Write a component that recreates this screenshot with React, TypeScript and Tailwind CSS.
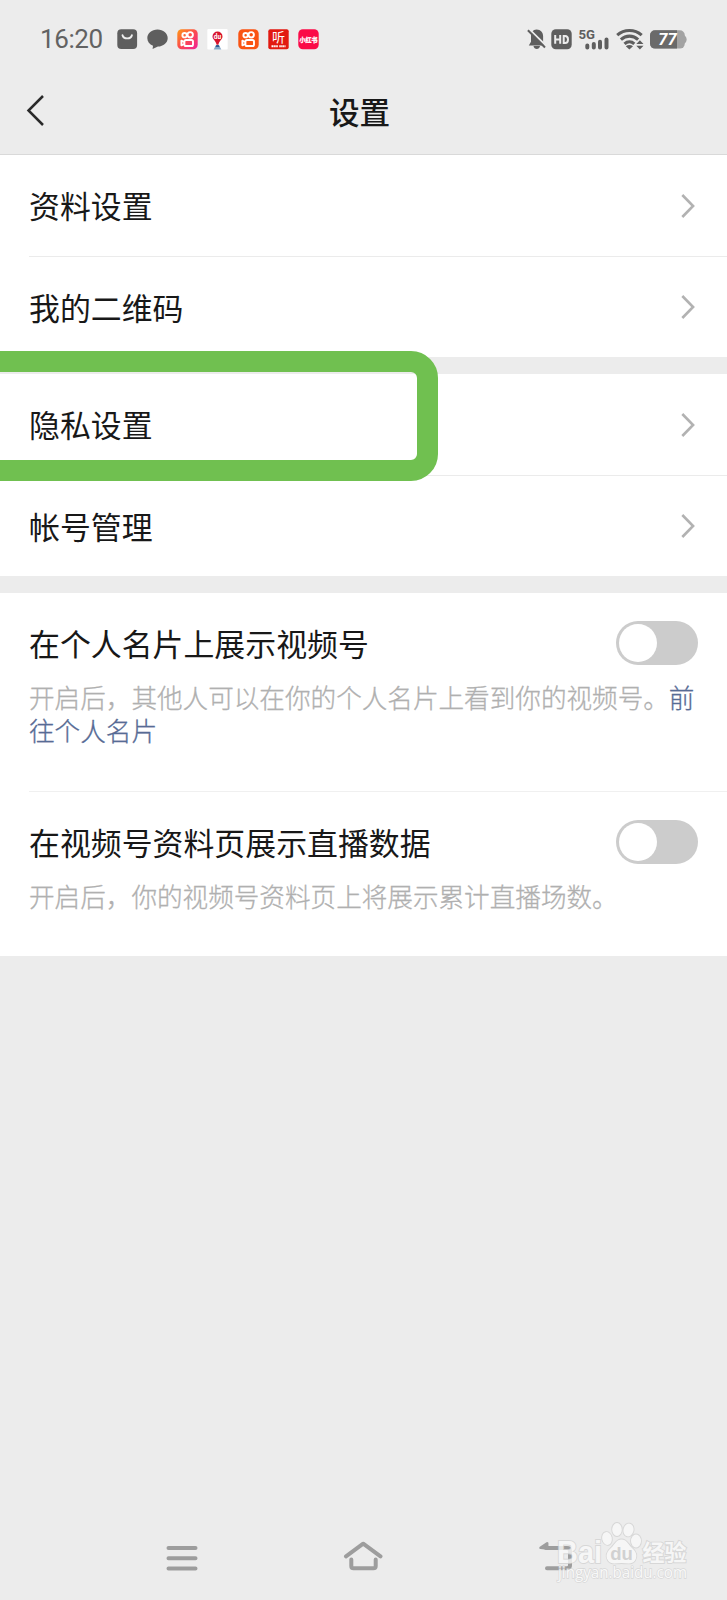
import type { ReactNode } from "react";

interface LinkItem {
  label: string;
}

interface ToggleItem {
  label: string;
  description: string;
  link?: string;
}

const LINK_GROUPS: LinkItem[][] = [
  [{ label: "资料设置" }, { label: "我的二维码" }],
  [{ label: "隐私设置" }, { label: "帐号管理" }],
];

const TOGGLES: ToggleItem[] = [
  {
    label: "在个人名片上展示视频号",
    description: "开启后，其他人可以在你的个人名片上看到你的视频号。",
    link: "前往个人名片",
  },
  {
    label: "在视频号资料页展示直播数据",
    description: "开启后，你的视频号资料页上将展示累计直播场数。",
  },
];

function AppIcon({ children }: { children: ReactNode }) {
  return (
    <svg width="21" height="21" viewBox="0 0 21 21" className="shrink-0 overflow-visible">
      {children}
    </svg>
  );
}

function CameraMark() {
  return (
    <g fill="none" stroke="#fff" strokeWidth="1.9">
      <circle cx="7.6" cy="6.2" r="2.2" />
      <circle cx="13.2" cy="5.8" r="2.7" />
      <rect x="7.4" y="11" width="8.6" height="6" rx="1.6" />
      <path d="M7.2 13 4.4 11.7v4.6L7.2 15" strokeLinejoin="round" />
    </g>
  );
}

function StatusBar() {
  return (
    <div className="flex h-[78px] items-center pl-[40px] pr-[40px]">
      <span className="w-[76.5px] whitespace-nowrap font-[Roboto] text-[26px] leading-[30px] tracking-[-0.4px] text-[#626262]">
        16:20
      </span>
      <div className="flex items-center gap-[9.3px]">
        <AppIcon>
          <rect x="0.3" y="0.3" width="19.8" height="19.8" rx="4" fill="#5e5e5e" />
          <path d="M5.5 6.2a4.8 4 0 0 0 9.4 0" fill="none" stroke="#eee" strokeWidth="1.9" strokeLinecap="round" />
        </AppIcon>
        <AppIcon>
          <path
            d="M10.5.4c5.7 0 10.2 3.6 10.2 8.6s-4.4 8.4-9.8 8.6l-5.3 2.5.4-3.4C2.5 15.3.3 12.5.3 9 .3 4 4.8.4 10.5.4Z"
            fill="#5e5e5e"
          />
        </AppIcon>
        <AppIcon>
          <defs>
            <linearGradient id="sunset" x1="0" y1="0" x2="1" y2="1">
              <stop offset="0" stopColor="#ff9a14" />
              <stop offset="0.5" stopColor="#fb4a4e" />
              <stop offset="1" stopColor="#f0209a" />
            </linearGradient>
          </defs>
          <rect x="0.3" y="0.3" width="20.4" height="20" rx="4.5" fill="url(#sunset)" />
          <CameraMark />
        </AppIcon>
        <AppIcon>
          <rect x="0.3" y="0" width="20.4" height="20.4" rx="1" fill="#fff" />
          <path
            d="M10.5 2.6a5 5 0 0 1 5 5c0 2.800-3.100 4.100-4.100 8.200H9.600c-1-4.100-4.100-5.400-4.100-8.200a5 5 0 0 1 5-5Z"
            fill="#d8142c"
          />
          <text x="10.5" y="9.8" fontSize="6.5" fontWeight="700" textAnchor="middle" fill="#fff" fontFamily="Roboto">
            du
          </text>
          <path d="M9 16h3l2.300 4.400H6.700Z" fill="#88aac9" />
          <path d="M9.300 16h2.400l.8 2h-4Z" fill="#335c93" />
        </AppIcon>
        <AppIcon>
          <rect x="0.3" y="0.3" width="20.4" height="20" rx="4.5" fill="#fa5312" />
          <CameraMark />
        </AppIcon>
        <AppIcon>
          <rect x="0.3" y="0.3" width="20.4" height="20" rx="2" fill="#e21910" />
          <text x="10.5" y="13" fontSize="13" textAnchor="middle" fill="#fff" fontFamily="'Noto Sans CJK SC'">
            听
          </text>
          <path d="M3.5 17.200h6.500M11.300 17.200h6.200" stroke="#fff" strokeWidth="2" strokeDasharray="1.500 .4" />
        </AppIcon>
        <AppIcon>
          <rect x="0.3" y="0.3" width="20.4" height="20" rx="4.5" fill="#fb0b47" />
          <text
            x="10.500"
            y="12.800"
            fontSize="6"
            fontWeight="700"
            textAnchor="middle"
            fill="#fff"
            stroke="#fff"
            strokeWidth="0.3"
            fontFamily="'Noto Sans CJK SC'"
          >
            小红书
          </text>
        </AppIcon>
      </div>

      <div className="ml-auto flex items-center">
        <svg width="20" height="21" viewBox="0 0 20 21" className="mr-[4px]">
          <path d="M9.500.6c4.300.2 6.600 3 6.600 6.500v5.600l2.300 3.900H1.800l2.200-3.900V7.100C4 3.500 5.900.8 9.500.600Z" fill="#5e5e5e" />
          <path d="M6.500 17h6.500c-.5 4-6 4-6.500 0Z" fill="#5e5e5e" />
          <path d="M2.300.300 19.600 17.300" stroke="#ececec" strokeWidth="2" />
          <path d="M.900 1.300 18 18.500" stroke="#5e5e5e" strokeWidth="2" />
        </svg>
        <svg width="21" height="21" viewBox="0 0 21 21" className="mr-[6px]">
          <rect x="0.3" y="0.3" width="20.4" height="20" rx="4.5" fill="#5e5e5e" />
          <path
            d="M4.200 6v8.800M9.200 6v8.800M4.200 10.400h5M12.700 6.900v7h1.400c1.900 0 2.900-1.400 2.900-3.500s-1-3.500-2.900-3.500Z"
            fill="none"
            stroke="#ececec"
            strokeWidth="2"
          />
        </svg>
        <svg width="32" height="21" viewBox="0 0 32 21" className="mr-[6px] overflow-visible">
          <text
            x="0.5"
            y="10"
            fontSize="13.500"
            fontWeight="700"
            textLength="16.500"
            lengthAdjust="spacingAndGlyphs"
            fill="#5e5e5e"
            fontFamily="Roboto"
          >
            5G
          </text>
          <path
            d="M9.300 16.500v2M15.800 15v3.500M22 12.700v5.800M28.500 10.500v8"
            stroke="#5e5e5e"
            strokeWidth="4"
            strokeLinecap="round"
          />
        </svg>
        <svg width="28" height="21" viewBox="0 0 28 21" className="mr-[6px] overflow-visible">
          <g fill="none" stroke="#5e5e5e" strokeWidth="3.100">
            <path d="M1.200 6.200C8.200 0 18.700 0 25.700 6.200" />
            <path d="M4.900 10.600c5-4.600 12.200-4.600 17.200 0" />
            <path d="M8.500 14.800c3-2.700 6.900-2.700 9.800 0" />
          </g>
          <path d="m9.800 17.300 3.600 3.200 3.600-3.200c-2-1.700-5.200-1.700-7.200 0Z" fill="#5e5e5e" />
          <path d="m20.300 14.900 3.600-3.700 3.600 3.700ZM20.300 16.700l3.600 3.700 3.600-3.700Z" fill="#5e5e5e" />
        </svg>
        <svg width="37" height="21" viewBox="0 0 37 21">
          <path d="M34 6.500c3.500 1 3.500 7 0 8Z" fill="#a2a2a2" />
          <rect x="0" y="1.200" width="34.800" height="18.400" rx="5" fill="#a2a2a2" />
          <path d="M5 1.200h22v18.400H5a5 5 0 0 1-5-5V6.200a5 5 0 0 1 5-5Z" fill="#6a6a6a" />
          <text
            x="17.500"
            y="16.300"
            fontSize="16.500"
            fontWeight="700"
            fontStyle="italic"
            textAnchor="middle"
            fill="#fff"
            fontFamily="Roboto"
          >
            77
          </text>
        </svg>
      </div>
    </div>
  );
}

function Header() {
  return (
    <header className="relative flex h-[77px] items-center justify-center border-b border-[#d9d9d9] pr-[8px]">
      <svg width="20" height="34" viewBox="0 0 20 34" className="absolute left-[26px] top-[15px]">
        <path d="M17 3 2.500 17.500 17 32" fill="none" stroke="#2a2a2a" strokeWidth="2.500" />
      </svg>
      <h1 className="pb-[10px] text-[30.6px] font-medium leading-[44px] text-[#181818]">设置</h1>
    </header>
  );
}

function Switch() {
  return (
    <button
      type="button"
      role="switch"
      aria-checked="false"
      className="flex h-[44px] w-[82px] shrink-0 items-center rounded-full bg-[#cccccc] pl-[3px]"
    >
      <span className="size-[37.5px] rounded-full bg-white" />
    </button>
  );
}

function LinkRow({ label, last }: LinkItem & { last: boolean }) {
  return (
    <div className="pl-[29px]">
      <div
        className={
          last
            ? "flex h-[100px] items-center pr-[32px]"
            : "flex h-[102px] items-center border-b border-[#ebebeb] pr-[32px]"
        }
      >
        <span className="flex-1 pb-[1px] text-[30.9px] leading-[44px]">{label}</span>
        <svg width="14" height="26" viewBox="0 0 14 26">
          <path d="M1.300 2 12.100 13 1.300 24" fill="none" stroke="#b2b2b2" strokeWidth="2.600" />
        </svg>
      </div>
    </div>
  );
}

function ToggleRow({ label, description, link }: ToggleItem) {
  return (
    <div className="pl-[29px] pt-[28px]">
      <div className="flex h-[44px] items-center justify-between pr-[29px]">
        <span className="pb-[1px] text-[30.9px] leading-[44px]">{label}</span>
        <Switch />
      </div>
      <p className="w-[680px] pt-[15px] text-[25.6px] font-light leading-[33px] text-[#b0b0b0] [-webkit-text-stroke:0.3px]">
        {description}
        {link && <a className="text-[#576b95]">{link}</a>}
      </p>
    </div>
  );
}

function NavBar() {
  return (
    <nav className="mt-auto flex h-[87px] items-center pl-[162px] text-[#9d9d9d]">
      <svg
        width="40"
        height="40"
        viewBox="0 0 40 40"
        fill="none"
        stroke="currentColor"
        strokeWidth="4"
        strokeLinecap="round"
        className="mr-[141px]"
      >
        <path d="M6.500 11h27M6.500 21.200h27M6.500 31.400h27" />
      </svg>
      <svg
        width="40"
        height="40"
        viewBox="0 0 40 40"
        fill="none"
        stroke="currentColor"
        strokeWidth="4"
        strokeLinecap="round"
        strokeLinejoin="round"
        className="mr-[153px]"
      >
        <path d="M3 19.300 20.200 6.700 37.500 19.300M8.300 22.500v6.500q0 2.300 2.300 2.300h19.800q2.300 0 2.300-2.300v-6.500" />
      </svg>
      <svg
        width="40"
        height="40"
        viewBox="0 0 40 40"
        fill="none"
        stroke="currentColor"
        strokeWidth="4"
        strokeLinecap="round"
        strokeLinejoin="round"
      >
        <path d="M10 11h21q3 0 3 3V28.200q0 3-3 3H11" />
        <path d="m4.500 10.800 6.700-4.600v5.300Z" fill="currentColor" strokeWidth="2.500" />
      </svg>
    </nav>
  );
}

function Watermark() {
  return (
    <svg
      width="136"
      height="68"
      viewBox="0 0 136 68"
      className="absolute bottom-[9px] right-[37px] overflow-visible opacity-80"
      fontFamily="'Liberation Sans', 'Noto Sans CJK SC', sans-serif"
    >
      <g fill="#f9f9f9" stroke="#d2d2d2" strokeWidth="1.800" paintOrder="stroke">
        <text x="3" y="39.500" fontSize="31" fontWeight="700" textLength="45" lengthAdjust="spacingAndGlyphs">
          Bai
        </text>
        <ellipse cx="53" cy="15.500" rx="4.800" ry="6.500" transform="rotate(-12 53 15.500)" />
        <ellipse cx="63" cy="6.500" rx="4.800" ry="6.500" />
        <ellipse cx="74.500" cy="7" rx="5" ry="6.500" transform="rotate(12 74.500 7)" />
        <ellipse cx="82" cy="18" rx="5" ry="6.500" />
        <path d="M67.500 16.500c5 0 6.500 4.500 10 8 4.500 4 6.500 8 3.500 13-3 4.500-8 2.500-13.500 2.500s-10.500 2-13.500-2.500c-3-5-1-9 3.500-13 3.500-3.500 5-8 10-8Z" />
        <text x="88.500" y="37.500" fontSize="22.500" fontWeight="700" textLength="44" lengthAdjust="spacingAndGlyphs">
          经验
        </text>
      </g>
      <text x="67.500" y="37" fontSize="18.500" fontWeight="700" textAnchor="middle" fill="#cbcbcb">
        du
      </text>
      <text
        x="4"
        y="54.500"
        fontSize="16"
        textLength="129"
        lengthAdjust="spacingAndGlyphs"
        fill="#fcfcfc"
        stroke="#d2d2d2"
        strokeWidth="1.300"
        paintOrder="stroke"
        fontFamily="'Open Sans', sans-serif"
      >
        jingyan.baidu.com
      </text>
    </svg>
  );
}

export default function App() {
  return (
    <div className="relative flex h-[1600px] w-[727px] flex-col overflow-hidden bg-[#ececec] font-['Noto_Sans_CJK_SC',sans-serif] text-[#181818]">
      <StatusBar />
      <Header />
      <main className="flex flex-col">
        {LINK_GROUPS.map((group) => (
          <section key={group[0].label} className="mb-[17px] bg-white">
            {group.map((item, i) => (
              <LinkRow key={item.label} label={item.label} last={i === group.length - 1} />
            ))}
          </section>
        ))}
        <section className="bg-white">
          <div className="h-[198px]">
            <ToggleRow {...TOGGLES[0]} />
          </div>
          <div className="ml-[29px] h-px bg-[#f0f0f0]" />
          <div className="h-[164px]">
            <ToggleRow {...TOGGLES[1]} />
          </div>
        </section>
      </main>
      <NavBar />
      {/* marker frame around the privacy row, runs off the left edge */}
      <div className="absolute -left-[40px] top-[351px] h-[130px] w-[478px] rounded-[27px] border-[21px] border-[#70c050]" />
      <Watermark />
    </div>
  );
}
